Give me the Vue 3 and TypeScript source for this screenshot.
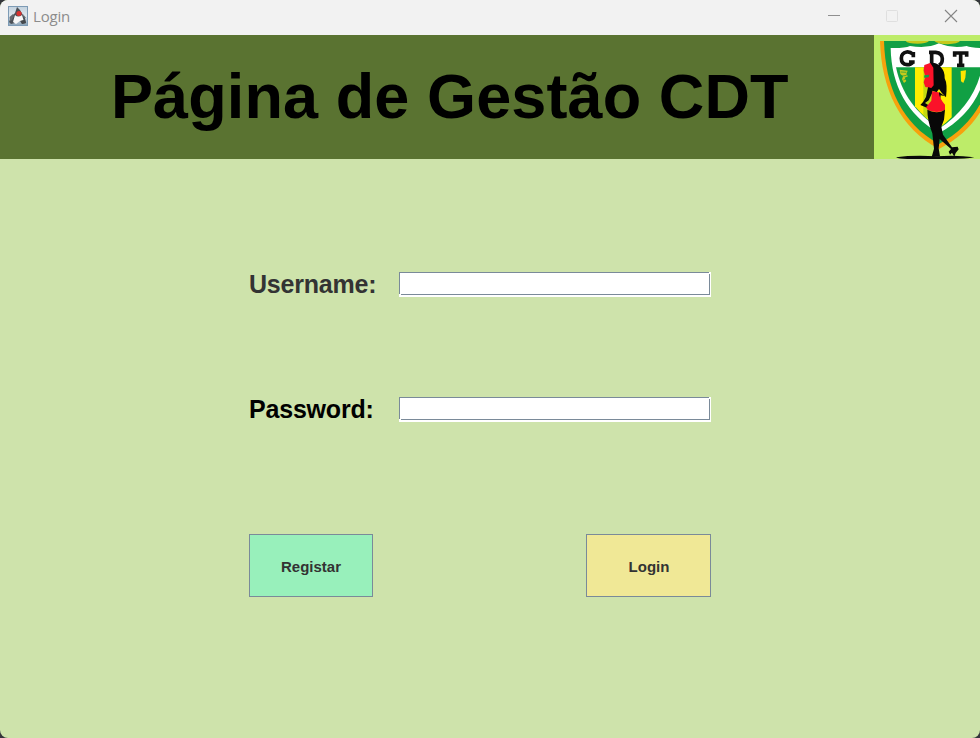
<script setup lang="ts">
import { ref } from 'vue'

const username = ref<string>('')
const password = ref<string>('')
</script>

<template>
  <div class="window">
    <div class="titlebar">
      <svg class="app-icon" viewBox="0 0 20 20">
        <defs>
          <linearGradient id="ic" x1="0" y1="0" x2="0" y2="1">
            <stop offset="0" stop-color="#c3d2de" />
            <stop offset="0.5" stop-color="#dfe7ed" />
            <stop offset="1" stop-color="#8aa3b8" />
          </linearGradient>
        </defs>
        <rect x="0.5" y="0.5" width="19" height="19" fill="url(#ic)" stroke="#7d9bb5" />
        <path d="M9 1 L12 4 L15 9 L17 12 L18 17 L14 18 L12 15 L7 17 L3 18 L1 16 L3 11 L7 7 Z" fill="#4b5056" />
        <path d="M7 9 Q10 12 14 9 L15.5 14 L12 15 L8 18 L5 16 Z" fill="#f6f6f6" />
        <path d="M1.5 11 L5 8 L6 10 L4 14 L2 15 Z M15 8 L18 12 L16 12 Z" fill="#63696f" />
        <ellipse cx="11" cy="7.4" rx="2.6" ry="2.5" fill="#d9322f" />
        <path d="M13 15 L17 14 L18 17 L14 18 Z" fill="#45484c" />
      </svg>
      <span class="caption">Login</span>
      <svg class="controls" viewBox="0 0 140 20" fill="none">
        <path d="M8 8.5 H20" stroke="#8f8f8f" />
        <rect x="66.5" y="3.5" width="11" height="11" rx="1" stroke="#dfdfdf" />
        <path d="M125 3 L137 15 M137 3 L125 15" stroke="#858585" stroke-width="1.1" />
      </svg>
    </div>

    <header class="header">
      <h1 class="title">Página de Gestão CDT</h1>
      <svg class="logo" viewBox="12 9 318 372">
        <rect x="12" y="9" width="318" height="372" fill="#bdec69" />
        <path d="M30 27 H385 C386 170 332 288 207 351 C90 290 34 170 30 27 Z" fill="#f6a20d" />
        <path d="M42 27 H373 C374 165 322 275 207 336 C95 275 46 165 42 27 Z" fill="#11a044" />
        <path d="M62 48 Q104 49 120 42 Q174 50 207 34 Q245 50 290 42 Q305 49 352 48 C356 162 306 248 207 304 C112 248 64 160 62 48 Z" fill="#fff" />
        <path d="M107 27 H177 Q168 35 143 35 Q113 35 107 27 Z M193 27 H270 Q264 35 233 37 Q201 36 193 27 Z" fill="#c6c91c" />
        <path d="M78 106 H336 C322 180 277 244 207 290 C139 244 94 185 78 106 Z" fill="#11a044" />
        <path d="M135 106 H245 V256 Q225 276 207 289 Q165 260 135 223 Z" fill="#ffed00" />
        <path d="M160 106 H190 V272 L160 250 Z" fill="#11a044" opacity="0.25" />
        <path d="M89 113 L113 116 L109 127 L114 133 L104 137 L109 147 L102 153 L96 142 L99 133 L91 126 Z" fill="#c6c91c" />
        <path d="M92 120 L109 121 M96 132 L110 130 M100 144 L109 141" fill="none" stroke="#11a044" stroke-width="2" />
        <path d="M272 117 L288 115 L286 137 L280 153 L273 148 Z" fill="#ffe500" />
        <g fill="none" stroke="#101010" stroke-width="11">
          <path d="M130 76 V60 M128 66 Q121 59 110 60 Q94 63 94 79 Q94 97 111 98 Q123 98 128 91 M117 90 H134" />
          <path d="M177 61 H197 Q217 63 217 80 Q217 97 206 99 M185 61 V100 M176 101 H199" />
          <path d="M250 63 H294 M254 58 V74 M290 58 V74 M272 63 V102 M261 100 H283" />
        </g>
        <path d="M181 92 Q204 91 214 107 Q225 119 224 139 Q233 156 228 196 Q214 183 207 171 L200 181 L186 176 L174 166 L181 154 L177 130 Z" fill="#080808" />
        <path d="M163 99 L181 93 L190 107 L191 160 L184 168 L166 165 L161 151 L166 134 L161 116 Z" fill="#fb1229" />
        <path d="M163 130 L178 128 L176 136 L162 137 Z" fill="#11a044" />
        <path d="M174 166 L183 169 L188 180 L176 205 L165 213 L178 221 L174 229 L151 219 L159 210 L168 195 Z" fill="#080808" />
        <path d="M207 180 L225 193 L212 190 L210 210 L202 207 Z" fill="#080808" />
        <path d="M186 178 L206 181 Q209 201 225 218 L225 234 Q201 246 174 234 L168 226 L184 206 Z" fill="#fb1229" />
        <path d="M172 233 Q202 248 225 233 L222 263 L214 284 L219 308 L246 346 L263 344 L266 352 L257 363 L253 374 L246 362 L240 368 L236 359 L243 351 L209 321 L206 349 L210 373 L185 375 L192 350 L187 304 Q172 267 172 233 Z" fill="#080808" />
        <path d="M78 376 Q130 369 198 373 Q260 368 313 376 Q290 381 240 381 H112 Q86 381 78 376 Z" fill="#080808" />
      </svg>
    </header>

    <form class="login" @submit.prevent>
      <div class="field">
        <label class="label soft" for="user">Username:</label>
        <input id="user" v-model="username" class="input" type="text" />
      </div>
      <div class="field">
        <label class="label" for="pass">Password:</label>
        <input id="pass" v-model="password" class="input" type="password" />
      </div>
      <div class="actions">
        <button class="button register" type="button">Registar</button>
        <button class="button enter" type="submit">Login</button>
      </div>
    </form>
  </div>
</template>

<style>
body {
  margin: 0;
  background: #34363b;
}
</style>

<style scoped>
.window {
  display: flex;
  flex-direction: column;
  width: 980px;
  height: 738px;
  overflow: hidden;
  border-radius: 8px;
  background: #cee3ab;
  font-family: "Liberation Sans", Arial, sans-serif;
}
.titlebar {
  display: flex;
  align-items: flex-start;
  box-sizing: border-box;
  flex: none;
  height: 35px;
  padding: 6px 20px 0 8px;
  background: #f2f2f2;
}
.app-icon {
  width: 20px;
  height: 20px;
}
.caption {
  margin-left: 5px;
  font: 15px/21px "Open Sans", "Noto Sans", sans-serif;
  letter-spacing: -0.2px;
  color: #8c8c8c;
}
.controls {
  width: 140px;
  height: 20px;
  margin: 1px 0 0 auto;
}
.header {
  display: flex;
  flex: none;
  height: 124px;
  background: #5a7331;
}
.title {
  flex: 1;
  margin: 0;
  padding-left: 111px;
  font-size: 63px;
  line-height: 123px;
  font-weight: bold;
  font-kerning: none;
  letter-spacing: 0.1px;
  white-space: nowrap;
  color: #000;
}
.logo {
  flex: none;
  width: 106px;
  height: 124px;
}
.login {
  display: flex;
  flex-direction: column;
  width: 462px;
  padding: 113px 0 0 249px;
}
.field {
  display: flex;
  height: 25px;
  margin-bottom: 100px;
}
.label {
  width: 150px;
  font-size: 25px;
  line-height: 25px;
  font-weight: bold;
  font-kerning: none;
  letter-spacing: -0.2px;
  color: #000;
}
.soft {
  color: #333;
}
.input {
  box-sizing: border-box;
  width: 312px;
  height: 25px;
  padding: 0 8px;
  border: 0;
  outline: 0;
  background:
    linear-gradient(#7a8a99, #7a8a99) 0 0 / 310px 1px no-repeat,
    linear-gradient(#7a8a99, #7a8a99) 0 0 / 1px 22px no-repeat,
    linear-gradient(#7a8a99, #7a8a99) 310px 2px / 1px 21px no-repeat,
    linear-gradient(#7a8a99, #7a8a99) 2px 22px / 309px 1px no-repeat,
    #fff;
}
.actions {
  display: flex;
  justify-content: space-between;
  margin-top: 12px;
}
.button {
  box-sizing: border-box;
  width: 125px;
  height: 63px;
  padding: 2px 0 0;
  border: 1px solid #7a8a99;
  font: bold 15px/18px "Liberation Sans", Arial, sans-serif;
  font-kerning: none;
  color: #333;
}
.register {
  width: 124px;
  background: #98f0bb;
}
.enter {
  padding-left: 1px;
  background: #f0e896;
}
</style>
